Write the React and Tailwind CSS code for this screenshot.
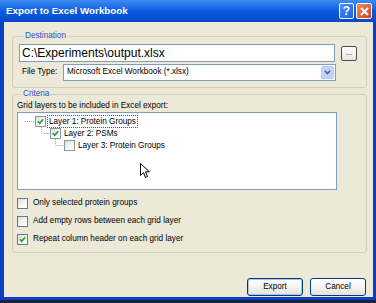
import React from 'react';

const font = { fontFamily: '"Liberation Sans", Arial, sans-serif' };

const Check = ({ checked, tree }) => (
    <span
        className={`flex items-center justify-center shrink-0 w-[11px] h-[11px] border ${tree ? 'border-[#8c96a3]' : 'border-[#5b7c9e]'} bg-gradient-to-br from-[#dcdcd5] via-[#f4f4f0] to-white`}
    >
        {checked && (
            <svg width="7" height="7" viewBox="0 0 7 7">
                <path d="M0.8 3.2 L2.7 5.2 L6.2 1.2" fill="none" stroke="#21a121" strokeWidth="1.6" />
            </svg>
        )}
    </span>
);

const Connector = ({ vertical }) => (
    <svg width="10" height="12" viewBox="0 0 10 12" className="shrink-0">
        {vertical && <line x1="1.5" y1="0" x2="1.5" y2="6" stroke="#a0a0a0" strokeDasharray="1 1" />}
        <line x1={vertical ? 1.5 : 0} y1="6.5" x2="10" y2="6.5" stroke="#a0a0a0" strokeDasharray="1 1" />
    </svg>
);

const TreeRow = ({ indent, vertical, checked, focused, label }) => (
    <div className="flex items-center h-[12px]" style={{ paddingLeft: indent }}>
        <Connector vertical={vertical} />
        <Check checked={checked} tree />
        <span className={`ml-[1px] px-[1px] leading-[11px] border border-dotted ${focused ? 'border-[#555]' : 'border-transparent'}`}>
            {label}
        </span>
    </div>
);

const Option = ({ checked, label }) => (
    <div className="flex items-center gap-[5px] h-[18px]">
        <Check checked={checked} />
        <span>{label}</span>
    </div>
);

const XpButton = ({ children, def }) => (
    <button
        className={`w-[56px] h-[18px] rounded-[3px] border border-[#003c74] bg-gradient-to-b from-white via-[#f4f4f0] to-[#e3e2da] text-[8.2px] text-black ${def ? 'shadow-[inset_0_0_0_1px_#a9c2ef]' : ''}`}
    >
        {children}
    </button>
);

export default function App() {
    return (
        <div className="w-[376px] h-[303px] bg-[#1c2244] overflow-hidden text-black" style={font}>
            <div className="h-[300px] flex flex-col">
                {/* title bar */}
                <div className="h-[22px] flex items-center pl-[6px] pr-[4px] bg-gradient-to-b from-[#3d8bf3] via-[#0a5de0] to-[#0749c8]">
                    <span className="text-white font-bold text-[9.8px] flex-1">Export to Excel Workbook</span>
                    <div className="flex items-center gap-[2px]">
                        <span className="w-[15px] h-[16px] rounded-[2px] border border-white bg-gradient-to-br from-[#4f8ff7] to-[#1c5fe0] flex items-center justify-center text-white font-bold text-[12px] leading-none">?</span>
                        <span className="w-[16px] h-[16px] rounded-[2px] border border-white bg-gradient-to-br from-[#f08a62] to-[#d3401b] flex items-center justify-center">
                            <svg width="9" height="9" viewBox="0 0 9 9">
                                <path d="M1 1 L8 8 M8 1 L1 8" stroke="white" strokeWidth="2" />
                            </svg>
                        </span>
                    </div>
                </div>

                {/* body */}
                <div className="flex-1 flex flex-col bg-[#ece9d8] border-l-4 border-r-[3px] border-b-[3px] border-[#0b3fc4] pl-[8px] pr-[6px] text-[8.2px]">
                    <fieldset className="mt-[9px] border border-[#d0d0bf] rounded-[3px] pl-[6px] pr-[9px] pb-[6px]">
                        <legend className="ml-[5px] px-[1px] text-[#2a55c0] leading-[10px]">Destination</legend>
                        <div className="flex items-center gap-[6px] mt-[3px]">
                            <div className="w-[316px] h-[18px] border border-[#7f9db9] bg-white flex items-center pl-[2px] text-[12px]">
                                C:\Experiments\output.xlsx
                            </div>
                            <button className="w-[16px] h-[15px] rounded-[2px] border border-[#4d4d4d] bg-gradient-to-b from-white to-[#e6e5de] text-[7px] leading-none pb-[2px]">...</button>
                        </div>
                        <div className="flex items-center mt-[2px]">
                            <span className="w-[44px] pl-[3px]">File Type:</span>
                            <div className="w-[273px] h-[17px] border border-[#7f9db9] bg-white flex items-center pl-[3px] pr-[1px]">
                                <span className="flex-1">Microsoft Excel Workbook (*.xlsx)</span>
                                <span className="w-[13px] h-[13px] rounded-[2px] bg-[#c3d3fd] border border-[#b4c8f6] flex items-center justify-center">
                                    <svg width="7" height="5" viewBox="0 0 7 5">
                                        <path d="M0.8 0.8 L3.5 3.6 L6.2 0.8" fill="none" stroke="#4d6185" strokeWidth="1.6" />
                                    </svg>
                                </span>
                            </div>
                        </div>
                    </fieldset>

                    <fieldset className="mt-[1px] border border-[#d0d0bf] rounded-[3px] pl-[4px] pr-[29px] pb-[4px]">
                        <legend className="ml-[5px] px-[1px] text-[#2a55c0] leading-[10px]">Criteria</legend>
                        <div className="mt-[2px] leading-[10px]">Grid layers to be included in Excel export:</div>
                        <div className="relative mt-[1px] h-[78px] border border-[#7f9db9] bg-white pt-[2px] pl-[7px]">
                            <TreeRow indent={0} checked focused label="Layer 1: Protein Groups" />
                            <TreeRow indent={15} vertical checked label="Layer 2: PSMs" />
                            <TreeRow indent={29} vertical label="Layer 3: Protein Groups" />
                            <svg className="absolute left-[122px] top-[50px]" width="11" height="16" viewBox="0 0 11 16">
                                <path d="M0.5 0.5 L0.5 12.5 L3.5 9.5 L5.5 14.5 L7.5 13.5 L5.5 8.8 L9.5 8.8 Z" fill="white" stroke="black" strokeWidth="1" />
                            </svg>
                        </div>
                        <div className="mt-[4px] flex flex-col">
                            <Option label="Only selected protein groups" />
                            <Option label="Add empty rows between each grid layer" />
                            <Option checked label="Repeat column header on each grid layer" />
                        </div>
                    </fieldset>

                    <div className="mt-auto mb-[1px] flex justify-end gap-[7px] pr-[1px]">
                        <XpButton def>Export</XpButton>
                        <XpButton>Cancel</XpButton>
                    </div>
                </div>
            </div>
        </div>
    );
}
